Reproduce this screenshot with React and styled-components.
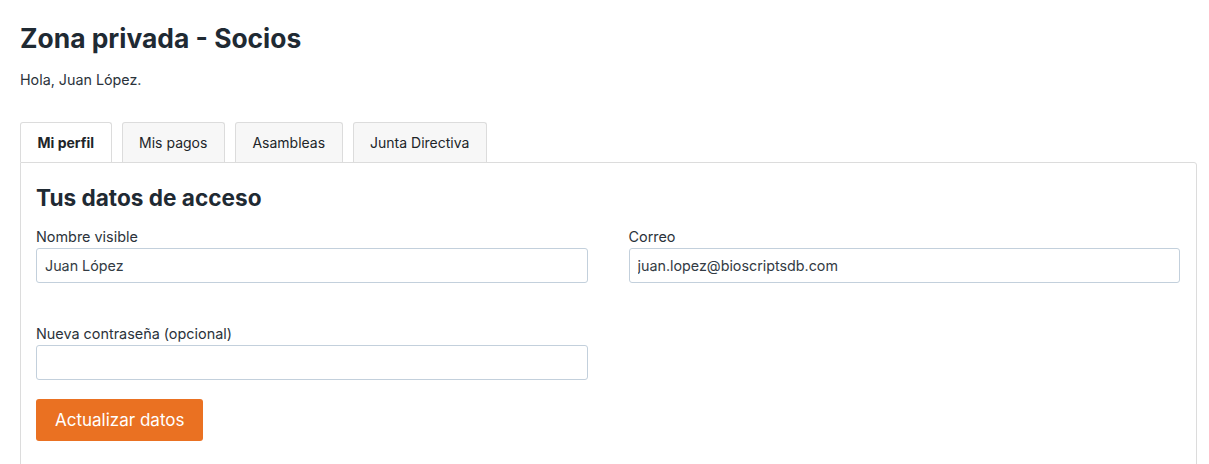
import React from 'react';
import styled, { createGlobalStyle } from 'styled-components';

const GlobalStyle = createGlobalStyle`
  body {
    margin: 0;
    background: #ffffff;
    font-family: Inter, "Noto Sans", "Liberation Sans", sans-serif;
    color: #212529;
  }
`;

const Page = styled.div`
  padding: 20px 12px 0 20px;
`;

const Title = styled.h1`
  margin: 0;
  font-size: 26.4px;
  font-weight: 700;
  line-height: 36px;
  color: #1f2a33;
`;

const Greeting = styled.p`
  margin: 14px 0 0;
  font-size: 14.3px;
  line-height: 20px;
  color: #2b333b;
`;

const TabList = styled.div`
  display: flex;
  gap: 10px;
  margin-top: 32px;
`;

const Tab = styled.div`
  height: 39px;
  display: flex;
  align-items: center;
  padding: 0 16.5px;
  border: 1px solid #dcdcdc;
  border-bottom: none;
  border-radius: 3px 3px 0 0;
  background: ${(p) => (p.$active ? '#ffffff' : '#f7f7f7')};
  font-size: 14px;
  font-weight: ${(p) => (p.$active ? 700 : 400)};
  color: #212529;
`;

const Panel = styled.section`
  border: 1px solid #dcdcdc;
  border-radius: 0 3px 0 0;
  padding: 20px 16px 30px 15px;
  min-height: 300px;
`;

const SectionTitle = styled.h2`
  margin: 0 0 14px;
  font-size: 22.6px;
  font-weight: 700;
  line-height: 30px;
  color: #1f2a33;
`;

const FormGrid = styled.div`
  display: grid;
  grid-template-columns: 1fr 1fr;
  column-gap: 41px;
  row-gap: 41px;
`;

const Field = styled.label`
  display: flex;
  flex-direction: column;
  gap: 1px;
`;

const LabelText = styled.span`
  font-size: 14.4px;
  line-height: 20px;
  color: #2b333b;
`;

const Input = styled.input`
  box-sizing: border-box;
  height: 35px;
  padding: 0 8px;
  border: 1px solid #c3d0dc;
  border-radius: 3px;
  font-family: inherit;
  font-size: 14.3px;
  color: #333b44;
  background: #fff;
  outline: none;
`;

const Button = styled.button`
  margin-top: 19px;
  height: 42px;
  padding: 0 19px;
  border: none;
  border-radius: 3px;
  background: #ea7122;
  color: #ffffff;
  font-family: inherit;
  font-size: 17px;
  cursor: pointer;
`;

const tabs = ['Mi perfil', 'Mis pagos', 'Asambleas', 'Junta Directiva'];

const App = () => {
  return (
    <Page>
      <GlobalStyle />
      <Title>Zona privada - Socios</Title>
      <Greeting>Hola, Juan López.</Greeting>
      <TabList>
        {tabs.map((t, i) => (
          <Tab key={t} $active={i === 0}>
            {t}
          </Tab>
        ))}
      </TabList>
      <Panel>
        <SectionTitle>Tus datos de acceso</SectionTitle>
        <FormGrid>
          <Field>
            <LabelText>Nombre visible</LabelText>
            <Input defaultValue="Juan López" />
          </Field>
          <Field>
            <LabelText>Correo</LabelText>
            <Input defaultValue="juan.lopez@bioscriptsdb.com" />
          </Field>
          <Field>
            <LabelText>Nueva contraseña (opcional)</LabelText>
            <Input type="password" />
          </Field>
        </FormGrid>
        <Button>Actualizar datos</Button>
      </Panel>
    </Page>
  );
};

export default App;
